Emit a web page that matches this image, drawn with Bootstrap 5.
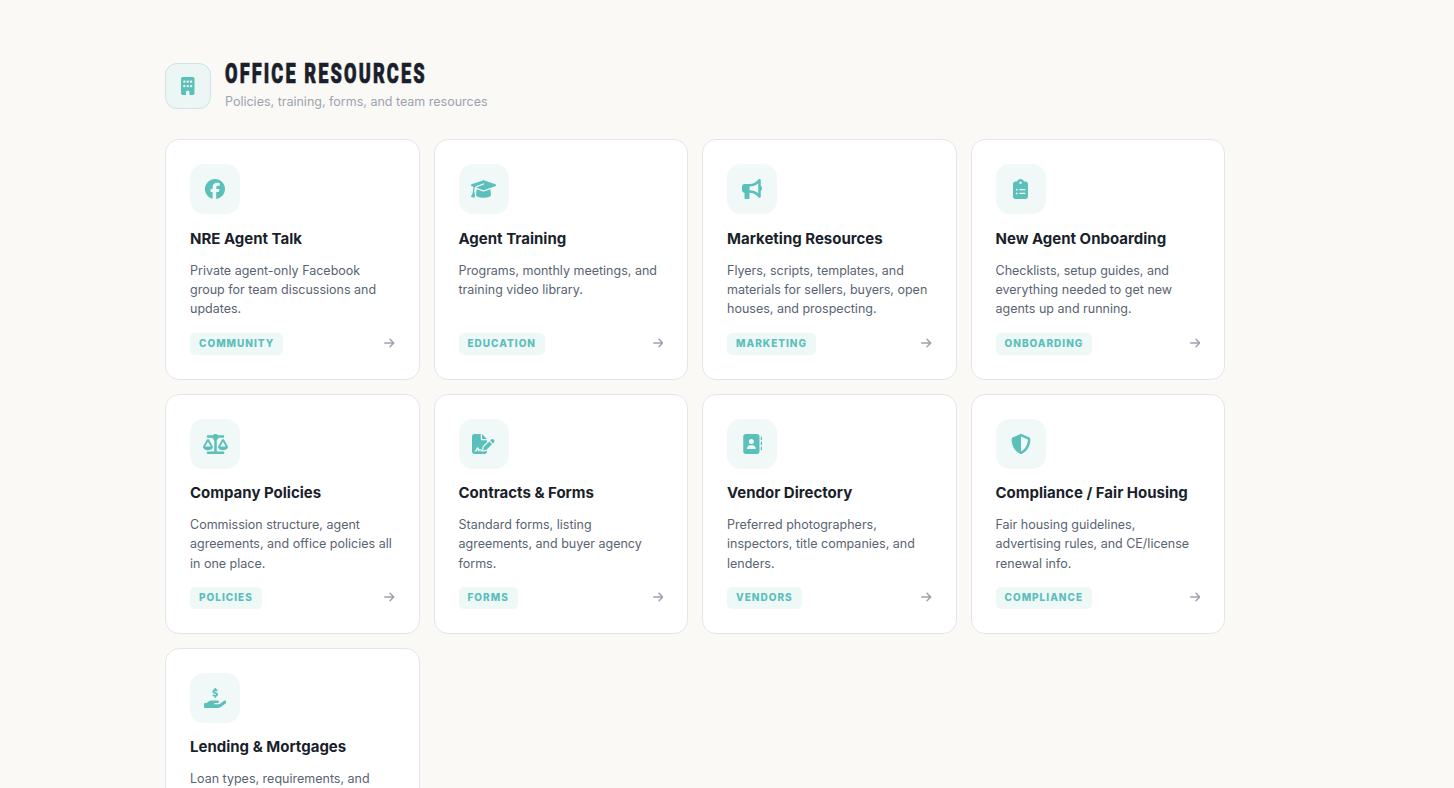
<!DOCTYPE html>
<html lang="en">
<head>
<meta charset="utf-8">
<meta name="viewport" content="width=device-width, initial-scale=1">
<title>Office Resources</title>
<link href="https://cdn.jsdelivr.net/npm/bootstrap@5.3.0/dist/css/bootstrap.min.css" rel="stylesheet">
<style>
  body { background: #faf9f6; font-family: Inter, "Liberation Sans", sans-serif; color: #1a1f2b; height: 100vh; }
  .page-wrap { width: 1060px; margin-left: 165px; padding-top: 60px; }
  .page-head { gap: 14px; height: 51px; margin-bottom: 28.45px; }
  .head-icon { width: 46px; height: 46px; margin-top: 3px; border-radius: 12px; border: 1px solid #cfe2e5; background: #ebf6f5; color: #5bbfba; }
  .head-title { font: 900 28.5px/28px Roboto, sans-serif; letter-spacing: 3.3px; transform: scaleX(.638); transform-origin: 0 50%; white-space: nowrap; width: 200px; -webkit-text-stroke: .7px currentColor; }
  .head-sub { font-size: 12.5px; line-height: 19px; color: #9ca3af; margin-top: 4px; }
  .res-grid { display: grid; grid-template-columns: repeat(4, 1fr); gap: 14px; }
  .res-card { border: 1px solid #e2e6ec; border-radius: 14px; padding: 24px; height: 240.1px; color: inherit; }
  .res-icon { width: 50px; height: 50px; border-radius: 14px; background: #f0f9f8; color: #5bbfba; margin-bottom: 13.7px; }
  .res-name { font-size: 15px; font-weight: 700; line-height: 22.5px; margin-bottom: 10.1px; white-space: nowrap; }
  .res-text { font-size: 12.5px; line-height: 19.375px; color: #5a6372; }
  .res-tag { font-size: 10px; font-weight: 800; line-height: 15px; letter-spacing: 1px; padding: 3.5px 9px; border-radius: 5px; background: #eef8f7; color: #5bbfba; }
  .res-arrow { color: #9ca3af; margin-bottom: 1px; }
  svg { fill: currentColor; display: block; }
</style>
</head>
<body class="overflow-hidden">
<main class="page-wrap">
  <header class="page-head d-flex align-items-start">
    <div class="head-icon d-flex align-items-center justify-content-center flex-shrink-0">
      <svg width="13.5" height="18" viewBox="0 0 384 512"><path d="M48 0C21.500 0 0 21.500 0 48V464c0 26.500 21.500 48 48 48h96V432c0-26.500 21.500-48 48-48s48 21.500 48 48v80h96c26.500 0 48-21.500 48-48V48c0-26.500-21.500-48-48-48H48zM64 240c0-8.800 7.200-16 16-16h32c8.800 0 16 7.200 16 16v32c0 8.800-7.200 16-16 16H80c-8.800 0-16-7.200-16-16V240zm112-16h32c8.800 0 16 7.200 16 16v32c0 8.800-7.200 16-16 16H176c-8.800 0-16-7.200-16-16V240c0-8.800 7.200-16 16-16zm80 16c0-8.800 7.200-16 16-16h32c8.800 0 16 7.200 16 16v32c0 8.800-7.200 16-16 16H272c-8.800 0-16-7.200-16-16V240zM80 96h32c8.800 0 16 7.200 16 16v32c0 8.800-7.200 16-16 16H80c-8.800 0-16-7.200-16-16V112c0-8.800 7.200-16 16-16zm80 16c0-8.800 7.200-16 16-16h32c8.800 0 16 7.200 16 16v32c0 8.800-7.200 16-16 16H176c-8.800 0-16-7.200-16-16V112zM272 96h32c8.800 0 16 7.200 16 16v32c0 8.800-7.200 16-16 16H272c-8.800 0-16-7.200-16-16V112c0-8.800 7.200-16 16-16z"/></svg>
    </div>
    <div>
      <h1 class="head-title mb-0">OFFICE RESOURCES</h1>
      <p class="head-sub mb-0">Policies, training, forms, and team resources</p>
    </div>
  </header>

  <section class="res-grid">
    <article class="res-card bg-white d-flex flex-column">
      <div class="res-icon d-flex align-items-center justify-content-center">
        <svg width="20" height="20" viewBox="0 0 512 512"><path d="M512 256C512 114.600 397.400 0 256 0S0 114.600 0 256C0 376 82.700 476.800 194.200 504.500V334.200H141.400V256h52.800V222.300c0-87.100 39.400-127.500 125-127.500c16.200 0 44.200 3.200 55.700 6.400V172c-6-.6-16.500-1-29.600-1c-42 0-58.200 15.900-58.200 57.200V256h83.600l-14.400 78.200H287V510.100C413.800 494.800 512 386.900 512 256z"/></svg>
      </div>
      <h2 class="res-name">NRE Agent Talk</h2>
      <p class="res-text mb-0">Private agent-only Facebook group for team discussions and updates.</p>
      <div class="d-flex align-items-center justify-content-between mt-auto">
        <span class="res-tag">COMMUNITY</span>
        <svg class="res-arrow" width="10.5" height="12" viewBox="0 0 448 512"><use href="#arrow"/></svg>
      </div>
    </article>

    <article class="res-card bg-white d-flex flex-column">
      <div class="res-icon d-flex align-items-center justify-content-center">
        <svg width="25" height="20" viewBox="0 0 640 512"><path d="M320 32c-8.100 0-16.100 1.400-23.700 4.100L15.800 137.400C6.300 140.900 0 149.900 0 160s6.300 19.100 15.800 22.600l57.900 20.900C57.300 229.300 48 259.800 48 291.900v28.100c0 28.400-10.800 57.700-22.300 80.800c-6.500 13-13.900 25.800-22.500 37.600C0 442.700-.9 448.300 .9 453.400s6 8.900 11.200 10.200l64 16c4.200 1.100 8.700 .3 12.400-2s6.300-6.100 7.100-10.400c8.600-42.800 4.300-81.200-2.100-108.700C90.300 344.300 86 329.800 80 316.500V291.900c0-30.200 10.200-58.700 27.900-81.500c12.900-15.500 29.600-28 49.200-35.700l157-61.700c8.200-3.200 17.500 .8 20.700 9s-.8 17.500-9 20.700l-157 61.700c-12.400 4.900-23.300 12.400-32.200 21.600l159.600 57.600c7.600 2.700 15.600 4.100 23.700 4.100s16.100-1.400 23.700-4.100L624.200 182.600c9.500-3.400 15.800-12.500 15.800-22.600s-6.300-19.100-15.800-22.600L343.700 36.100C336.100 33.400 328.100 32 320 32zM128 408c0 35.300 86 72 192 72s192-36.700 192-72L496.700 262.600 354.500 314c-11.100 4-22.800 6-34.500 6s-23.500-2-34.500-6L143.300 262.600 128 408z"/></svg>
      </div>
      <h2 class="res-name">Agent Training</h2>
      <p class="res-text mb-0">Programs, monthly meetings, and training video library.</p>
      <div class="d-flex align-items-center justify-content-between mt-auto">
        <span class="res-tag">EDUCATION</span>
        <svg class="res-arrow" width="10.5" height="12" viewBox="0 0 448 512"><use href="#arrow"/></svg>
      </div>
    </article>

    <article class="res-card bg-white d-flex flex-column">
      <div class="res-icon d-flex align-items-center justify-content-center">
        <svg width="20" height="20" viewBox="0 0 512 512"><path d="M480 32c0-12.900-7.800-24.600-19.800-29.600s-25.700-2.200-34.900 6.900L381.700 53c-48 48-113.100 75-181 75H64c-35.300 0-64 28.700-64 64v96c0 35.300 28.700 64 64 64V480c0 17.700 14.300 32 32 32h64c17.700 0 32-14.300 32-32V352h8.700c67.900 0 133 27 181 75l43.600 43.600c9.200 9.200 22.900 11.900 34.900 6.900s19.800-16.600 19.800-29.600V300.400c18.600-8.800 32-32.500 32-60.400s-13.400-51.600-32-60.400V32zm-64 76.700V371.300C357.200 317.800 280.500 288 200.700 288H192V192h8.700c79.800 0 156.500-29.800 215.300-83.300z"/></svg>
      </div>
      <h2 class="res-name">Marketing Resources</h2>
      <p class="res-text mb-0">Flyers, scripts, templates, and materials for sellers, buyers, open houses, and prospecting.</p>
      <div class="d-flex align-items-center justify-content-between mt-auto">
        <span class="res-tag">MARKETING</span>
        <svg class="res-arrow" width="10.5" height="12" viewBox="0 0 448 512"><use href="#arrow"/></svg>
      </div>
    </article>

    <article class="res-card bg-white d-flex flex-column">
      <div class="res-icon d-flex align-items-center justify-content-center">
        <svg width="15" height="20" viewBox="0 0 384 512"><path d="M192 0c-41.800 0-77.400 26.700-90.500 64H64C28.700 64 0 92.700 0 128V448c0 35.300 28.700 64 64 64H320c35.300 0 64-28.700 64-64V128c0-35.300-28.700-64-64-64H282.500C269.400 26.700 233.800 0 192 0zm0 64a32 32 0 1 1 0 64 32 32 0 1 1 0-64zM72 272a24 24 0 1 1 48 0 24 24 0 1 1 -48 0zm104-16H304c8.800 0 16 7.200 16 16s-7.200 16-16 16H176c-8.800 0-16-7.200-16-16s7.200-16 16-16zM72 368a24 24 0 1 1 48 0 24 24 0 1 1 -48 0zm88 0c0-8.800 7.200-16 16-16H304c8.800 0 16 7.200 16 16s-7.200 16-16 16H176c-8.800 0-16-7.200-16-16z"/></svg>
      </div>
      <h2 class="res-name">New Agent Onboarding</h2>
      <p class="res-text mb-0">Checklists, setup guides, and everything needed to get new agents up and running.</p>
      <div class="d-flex align-items-center justify-content-between mt-auto">
        <span class="res-tag">ONBOARDING</span>
        <svg class="res-arrow" width="10.5" height="12" viewBox="0 0 448 512"><use href="#arrow"/></svg>
      </div>
    </article>

    <article class="res-card bg-white d-flex flex-column">
      <div class="res-icon d-flex align-items-center justify-content-center">
        <svg width="25" height="20" viewBox="0 0 640 512"><path d="M384 32H512c17.700 0 32 14.300 32 32s-14.300 32-32 32H398.400c-5.200 25.800-22.900 47.100-46.400 57.300V448H512c17.700 0 32 14.300 32 32s-14.300 32-32 32H128c-17.700 0-32-14.300-32-32s14.300-32 32-32H288V153.300c-23.500-10.300-41.200-31.600-46.400-57.300H128c-17.700 0-32-14.300-32-32s14.300-32 32-32H256c14.600-19.400 37.800-32 64-32s49.400 12.600 64 32zm55.600 288H584.400L512 195.800 439.600 320zM512 416c-62.900 0-115.200-34-126-78.900c-2.600-11 1-22.300 6.700-32.100l95.200-163.200c5-8.600 14.200-13.800 24.100-13.800s19.100 5.300 24.100 13.800l95.200 163.200c5.700 9.800 9.300 21.100 6.700 32.100C627.200 382 574.900 416 512 416zM126.800 195.800L54.400 320H199.300L126.800 195.800zM.9 337.100c-2.600-11 1-22.300 6.700-32.100l95.200-163.200c5-8.600 14.200-13.800 24.100-13.800s19.100 5.300 24.100 13.800l95.200 163.200c5.700 9.800 9.300 21.100 6.700 32.100C242 382 189.700 416 126.800 416S11.700 382 .9 337.100z"/></svg>
      </div>
      <h2 class="res-name">Company Policies</h2>
      <p class="res-text mb-0">Commission structure, agent agreements, and office policies all in one place.</p>
      <div class="d-flex align-items-center justify-content-between mt-auto">
        <span class="res-tag">POLICIES</span>
        <svg class="res-arrow" width="10.5" height="12" viewBox="0 0 448 512"><use href="#arrow"/></svg>
      </div>
    </article>

    <article class="res-card bg-white d-flex flex-column">
      <div class="res-icon d-flex align-items-center justify-content-center">
        <svg width="22.5" height="20" viewBox="0 0 576 512"><path d="M64 0C28.700 0 0 28.700 0 64V448c0 35.300 28.700 64 64 64H320c35.300 0 64-28.700 64-64V428.700c-2.700 1.100-5.400 2-8.200 2.700l-60.100 15c-3 .7-6 1.200-9 1.400c-.9 .1-1.800 .2-2.700 .2H240c-6.100 0-11.600-3.400-14.300-8.800l-8.800-17.700c-1.700-3.400-5.100-5.500-8.800-5.500s-7.200 2.100-8.800 5.500l-8.800 17.700c-2.900 5.900-9.200 9.400-15.700 8.800s-12.100-5.100-13.900-11.300L144 381l-9.800 32.800c-6.100 20.300-24.800 34.200-46 34.200H80c-8.800 0-16-7.200-16-16s7.200-16 16-16h8.200c7.100 0 13.300-4.600 15.300-11.400l14.900-49.500c3.400-11.300 13.800-19.100 25.600-19.100s22.200 7.800 25.600 19.100l11.600 38.600c7.400-6.200 16.800-9.700 26.800-9.700c15.900 0 30.400 9 37.500 23.200l4.400 8.800h8.900c-3.100-8.800-3.700-18.400-1.400-27.800l15-60.100c2.800-11.300 8.600-21.500 16.800-29.700L384 203.600V160H256c-17.700 0-32-14.300-32-32V0H64zM256 0V128H384L256 0zM549.800 139.700c-15.600-15.600-40.900-15.600-56.600 0l-29.400 29.400 71 71 29.400-29.400c15.600-15.600 15.600-40.900 0-56.600l-14.400-14.400zM311.900 321c-4.100 4.100-7 9.200-8.400 14.900l-15 60.100c-1.400 5.500 .2 11.200 4.200 15.200s9.700 5.600 15.200 4.200l60.100-15c5.600-1.400 10.800-4.300 14.900-8.400L512.100 262.700l-71-71L311.900 321z"/></svg>
      </div>
      <h2 class="res-name">Contracts &amp; Forms</h2>
      <p class="res-text mb-0">Standard forms, listing agreements, and buyer agency forms.</p>
      <div class="d-flex align-items-center justify-content-between mt-auto">
        <span class="res-tag">FORMS</span>
        <svg class="res-arrow" width="10.5" height="12" viewBox="0 0 448 512"><use href="#arrow"/></svg>
      </div>
    </article>

    <article class="res-card bg-white d-flex flex-column">
      <div class="res-icon d-flex align-items-center justify-content-center">
        <svg width="20" height="20" viewBox="0 0 512 512"><path d="M96 0C60.700 0 32 28.700 32 64V448c0 35.300 28.700 64 64 64H384c35.300 0 64-28.700 64-64V64c0-35.300-28.700-64-64-64H96zM208 288h64c44.200 0 80 35.800 80 80c0 8.800-7.200 16-16 16H144c-8.800 0-16-7.200-16-16c0-44.200 35.800-80 80-80zm-32-96a64 64 0 1 1 128 0 64 64 0 1 1 -128 0zM512 80c0-8.800-7.200-16-16-16s-16 7.200-16 16v64c0 8.800 7.200 16 16 16s16-7.200 16-16V80zM496 192c-8.800 0-16 7.200-16 16v64c0 8.800 7.200 16 16 16s16-7.200 16-16V208c0-8.800-7.200-16-16-16zm16 144c0-8.800-7.200-16-16-16s-16 7.200-16 16v64c0 8.800 7.200 16 16 16s16-7.200 16-16V336z"/></svg>
      </div>
      <h2 class="res-name">Vendor Directory</h2>
      <p class="res-text mb-0">Preferred photographers, inspectors, title companies, and lenders.</p>
      <div class="d-flex align-items-center justify-content-between mt-auto">
        <span class="res-tag">VENDORS</span>
        <svg class="res-arrow" width="10.5" height="12" viewBox="0 0 448 512"><use href="#arrow"/></svg>
      </div>
    </article>

    <article class="res-card bg-white d-flex flex-column">
      <div class="res-icon d-flex align-items-center justify-content-center">
        <svg width="20" height="20" viewBox="0 0 512 512"><path d="M256 0c4.600 0 9.200 1 13.400 2.900L457.700 82.800c22 9.300 38.400 31 38.300 57.200c-.5 99.200-41.300 280.700-213.600 363.200c-16.700 8-36.100 8-52.800 0C57.300 420.700 16.500 239.200 16 140c-.1-26.200 16.300-47.900 38.300-57.200L242.700 2.900C246.800 1 251.400 0 256 0zm0 66.800V444.800C394 378 431.100 230.100 432 141.400L256 66.800z"/></svg>
      </div>
      <h2 class="res-name">Compliance / Fair Housing</h2>
      <p class="res-text mb-0">Fair housing guidelines, advertising rules, and CE/license renewal info.</p>
      <div class="d-flex align-items-center justify-content-between mt-auto">
        <span class="res-tag">COMPLIANCE</span>
        <svg class="res-arrow" width="10.5" height="12" viewBox="0 0 448 512"><use href="#arrow"/></svg>
      </div>
    </article>

    <article class="res-card bg-white d-flex flex-column">
      <div class="res-icon d-flex align-items-center justify-content-center">
        <svg width="22.5" height="20" viewBox="0 0 576 512"><path d="M312 24V34.500c6.400 1.200 12.600 2.700 18.200 4.200c12.800 3.400 20.400 16.600 17 29.400s-16.600 20.400-29.400 17c-10.900-2.900-21.100-4.900-30.200-5c-7.300-.1-14.700 1.700-19.400 4.400c-2.100 1.300-3.100 2.400-3.500 3c-.3 .5-.7 1.200-.7 2.800c0 .3 0 .5 0 .6c.2 .2 .9 1.200 3.300 2.600c5.800 3.500 14.400 6.200 27.400 10.100l.9 .3c11.100 3.300 25.900 7.800 37.900 15.300c13.700 8.600 26.100 22.900 26.400 44.900c.3 22.500-11.400 38.900-26.700 48.500c-6.700 4.100-13.900 7-21.300 8.800V232c0 13.300-10.700 24-24 24s-24-10.700-24-24V220.600c-9.500-2.300-18.200-5.300-25.600-7.800c-2.100-.7-4.100-1.400-6-2c-12.600-4.200-19.400-17.800-15.200-30.400s17.800-19.400 30.400-15.200c2.600 .9 5 1.700 7.300 2.500c13.600 4.600 23.400 7.900 33.900 8.300c8 .3 15.100-1.600 19.200-4.100c1.900-1.200 2.800-2.200 3.200-2.900c.4-.6 .9-1.800 .8-4.100l0-.2c0-1 0-2.100-4-4.600c-5.700-3.600-14.300-6.400-27.100-10.300l-1.900-.6c-10.800-3.200-25-7.500-36.400-14.400c-13.500-8.100-26.500-22-26.600-44.100c-.1-22.900 12.900-38.600 27.700-47.400c6.400-3.800 13.300-6.400 20.200-8.200V24c0-13.300 10.700-24 24-24s24 10.700 24 24zM568.200 336.300c13.100 17.800 9.300 42.800-8.500 55.900L433.100 485.500c-23.400 17.200-51.600 26.500-80.700 26.500H32c-17.700 0-32-14.300-32-32V416c0-17.700 14.300-32 32-32H68.800l44.900-36c22.700-18.200 50.900-28 80-28H352c17.700 0 32 14.300 32 32s-14.300 32-32 32H272c-8.800 0-16 7.200-16 16s7.200 16 16 16H392.600l119.700-88.200c17.800-13.100 42.800-9.300 55.900 8.500z"/></svg>
      </div>
      <h2 class="res-name">Lending &amp; Mortgages</h2>
      <p class="res-text mb-0">Loan types, requirements, and</p>
    </article>
  </section>
</main>
<svg class="d-none"><defs><path id="arrow" d="M438.600 278.600c12.500-12.500 12.500-32.800 0-45.300l-160-160c-12.500-12.500-32.800-12.500-45.300 0s-12.500 32.800 0 45.300L338.800 224H32c-17.700 0-32 14.300-32 32s14.300 32 32 32H338.700L233.400 393.400c-12.500 12.500-12.500 32.800 0 45.300s32.800 12.500 45.300 0l160-160z"/></defs></svg>
<script src="https://cdn.jsdelivr.net/npm/bootstrap@5.3.0/dist/js/bootstrap.bundle.min.js"></script>
</body>
</html>
